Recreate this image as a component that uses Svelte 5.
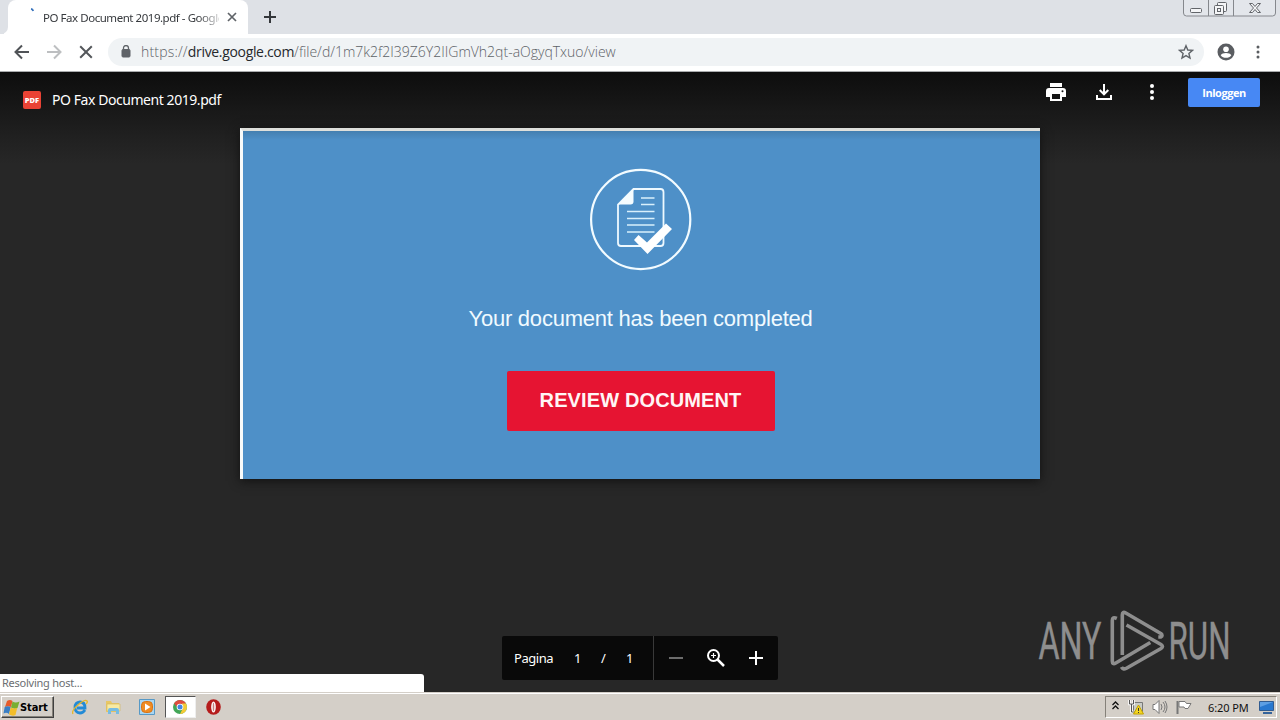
<script lang="ts">
	const fileName = 'PO Fax Document 2019.pdf';
	const path = '/file/d/1m7k2f2I39Z6Y2IIGmVh2qt-aOgyqTxuo/view';
	const lines = [217.5, 224.5, 231, 238];
</script>

<div class="screen">
	<header class="tab-strip">
		<div class="previous-tab"></div>
		<div class="tab">
			<svg class="spinner" width="16" height="16" viewBox="0 0 16 16">
				<path d="M7 2.800Q8.700 3 9.200 5" fill="none" stroke="#3974bd" stroke-width="1.800" />
			</svg>
			<span class="tab-title">{fileName} - Google</span>
			<svg width="10" height="10" viewBox="0 0 10 10">
				<path d="M1 1l8 8M9 1L1 9" stroke="#5f6368" stroke-width="1.700" />
			</svg>
		</div>
		<div class="new-tab">
			<svg width="12" height="12" viewBox="0 0 12 12">
				<path d="M6 0v12M0 6h12" stroke="#34373b" stroke-width="2" />
			</svg>
		</div>
		<svg class="window-controls" width="94" height="17" viewBox="0 0 94 17">
			<path d="M.5 0v13q0 3 3 3h86q3 0 3-3V0M25.500 0v16M50.500 0v16" fill="#e3e6eb" stroke="#85888d" />
			<g fill="#f4f5f7" stroke="#62656a">
				<rect x="7.500" y="8.500" width="11" height="4" rx="1" />
				<rect x="34.500" y="2.500" width="9" height="9" rx="1" />
				<rect x="31.500" y="5.500" width="9" height="9" rx="1" />
				<rect x="34.500" y="8.500" width="3" height="3" />
				<path d="M66.500 3.500h3l2.500 3 2.500-3h3l-4 4.500 4 4.500h-3l-2.500-3-2.500 3h-3l4-4.500z" />
			</g>
		</svg>
	</header>

	<nav class="toolbar">
		<svg class="nav-icon" viewBox="0 0 16 16">
			<path d="M15 8H2M8 1.500L1.500 8 8 14.500" fill="none" stroke="#505357" stroke-width="2" />
		</svg>
		<svg class="nav-icon" viewBox="0 0 16 16">
			<path d="M1 8h13M8 1.500L14.500 8 8 14.500" fill="none" stroke="#bdbfc1" stroke-width="2" />
		</svg>
		<svg class="nav-icon" viewBox="0 0 16 16">
			<path d="M2.200 2.200l11.600 11.600M13.800 2.200L2.200 13.800" stroke="#54575b" stroke-width="2" />
		</svg>
		<div class="address">
			<svg width="10" height="13" viewBox="0 0 10 13">
				<rect x="1" y="4.500" width="8" height="7.500" rx="1" fill="#5f6368" stroke="#5f6368" />
				<path d="M2.500 5V3a2.500 2.500 0 015 0v2" fill="none" stroke="#5f6368" stroke-width="1.300" />
			</svg>
			<span class="url"><span class="scheme">https://</span><b>drive.google.com</b>{path}</span>
			<svg class="star" width="16" height="16" viewBox="0 0 16 16">
				<path d="M8 1.700l1.800 4.300 4.700.4-3.600 3.100 1.100 4.600L8 11.600l-4 2.500 1.100-4.600L1.500 6.400l4.700-.4z" fill="none" stroke="#5f6368" stroke-width="1.400" />
			</svg>
		</div>
		<svg class="profile" width="18" height="18" viewBox="0 0 18 18">
			<circle cx="9" cy="9" r="8.500" fill="#5a5d61" />
			<circle cx="9" cy="6.200" r="2.800" fill="#fff" />
			<path d="M3.700 12.200C5 9.400 13 9.400 14.300 12.200 12 15.700 6 15.700 3.700 12.200z" fill="#fff" />
		</svg>
		<svg class="browser-menu" width="4" height="14" viewBox="0 0 4 14" fill="#5a5d61">
			<circle cx="2" cy="2" r="1.500" /><circle cx="2" cy="7" r="1.500" /><circle cx="2" cy="12" r="1.500" />
		</svg>
	</nav>

	<main class="viewer">
		<div class="viewer-bar">
			<div class="pdf-badge">PDF</div>
			<h1>{fileName}</h1>
			<div class="viewer-actions">
				<svg width="20" height="18" viewBox="0 0 20 18">
					<path d="M4 0h12v4H4zM3 5h14q3 0 3 3v6h-4v4H4v-4H0V8q0-3 3-3z" fill="#fff" />
					<path d="M6 11h8v5H6z" fill="#151515" />
					<circle cx="16.500" cy="8.300" r="1" fill="#151515" />
				</svg>
				<svg width="16" height="16" viewBox="0 0 16 16">
					<path d="M8 0v10M3.700 6L8 10.300 12.300 6M1 11v4h14v-4" fill="none" stroke="#fff" stroke-width="2" />
				</svg>
				<svg width="4" height="16" viewBox="0 0 4 16" fill="#fff">
					<circle cx="2" cy="2" r="2" /><circle cx="2" cy="8" r="2" /><circle cx="2" cy="14" r="2" />
				</svg>
			</div>
			<button class="login">Inloggen</button>
		</div>

		<section class="page">
			<svg class="document-icon" width="102" height="104" viewBox="590 168 102 104">
				<circle cx="640.700" cy="219.500" r="49.600" fill="none" stroke="#f2fbff" stroke-width="2.200" />
				<path d="M633.500 189h27q3 0 3 3v51q0 3-3 3h-39.500q-3 0-3-3v-38.500z" fill="none" stroke="#eef9ff" stroke-width="1.800" />
				<path d="M618 204.500L633.500 189v12.500q0 3-3 3z" fill="#f5fcff" />
				<path d="M641 198h13.500M641 204.500h13.500" stroke="#d9f0fc" stroke-width="1.500" />
				{#each lines as y}
					<path d="M627 {y - 6}h27.500" stroke="#d9f0fc" stroke-width="1.500" />
				{/each}
				<path d="M634 240l4.500-5 8.500 7.500 19-19 6 5.500-24.500 25z" fill="#fff" />
			</svg>
			<p>Your document has been completed</p>
			<button class="review">REVIEW DOCUMENT</button>
		</section>

		<svg class="watermark" width="198" height="64" viewBox="1036 608 198 64">
			<g fill="#8e8e8e" stroke="#8e8e8e" stroke-width=".4" font-family="Roboto, sans-serif" font-size="51">
				<text x="1038.500" y="659" textLength="63" lengthAdjust="spacingAndGlyphs">ANY</text>
				<text x="1168.500" y="659" textLength="62" lengthAdjust="spacingAndGlyphs">RUN</text>
			</g>
			<g fill="none" stroke="#8e8e8e" stroke-width="3.600" stroke-linejoin="round">
				<path d="M1116.800 618.500q-4.500-2-4.500 2V661q0 4 3.500 2l34.500-20.500" />
				<path d="M1122.300 655v-40q0-4 3.500-2l35 20.500q2.500 2 0 3.500h-2.500" />
				<path d="M1126.500 625l34.500 19.500q3 2 0 4L1126 668.500q-3 1.500-4.500-1.500" />
			</g>
		</svg>

		<div class="page-controls">
			<div class="page-count">
				<span class="label">Pagina</span><span class="current">1</span><span class="slash">/</span><span>1</span>
			</div>
			<div class="zoom-controls">
				<svg width="14" height="14" viewBox="0 0 14 14"><path d="M0 7h14" stroke="#6c6c6c" stroke-width="2" /></svg>
				<svg width="18" height="18" viewBox="0 0 18 18">
					<circle cx="6.500" cy="6.500" r="5.500" fill="none" stroke="#fff" stroke-width="2" />
					<path d="M10.500 10.500l6.500 6.500" stroke="#fff" stroke-width="2.500" />
					<path d="M6.500 4v5M4 6.500h5" stroke="#fff" stroke-width="1.200" />
				</svg>
				<svg width="14" height="14" viewBox="0 0 14 14"><path d="M0 7h14M7 0v14" stroke="#fff" stroke-width="2" /></svg>
			</div>
		</div>
		<div class="status">Resolving host...</div>
	</main>

	<footer class="taskbar">
		<button class="start">
			<svg width="17" height="17" viewBox="0 0 17 17">
				<path d="M4 2q3-2 5.500 0L8 8Q5 6.500 2 8z" fill="#e65b2b" />
				<path d="M9.500 2.500q3 2 7 0L14.500 9q-3 1.500-6.500-.5z" fill="#79ae31" />
				<path d="M1.700 8q3-1.500 6 0L6 15q-2.500-2-5.500-.5z" fill="#397ec4" />
				<path d="M7.700 8.500q3 1.700 6.500.5l-1.700 7q-3 1.500-6.500-.5z" fill="#f3bd29" />
			</svg>
			<span>Start</span>
		</button>
		<div class="quick-launch">
			<div class="launcher">
				<svg width="16" height="16" viewBox="0 0 16 16">
					<path d="M13 11q-2 3-5 3-5-.5-5-5.500T8 3q5 0 5 6H5" fill="none" stroke="#238bd6" stroke-width="2.800" />
					<path d="M1 15Q-1 12 6 6t9-4q1 1-1 3" fill="none" stroke="#e6b72b" stroke-width="1.300" />
				</svg>
			</div>
			<div class="launcher">
				<svg width="16" height="16" viewBox="0 0 16 16">
					<path d="M1 2h5l1 2h7v9H1z" fill="#e8c765" />
					<path d="M2 5h13v7H2z" fill="#f8eaa2" stroke="#d2b55b" stroke-width=".6" />
					<path d="M3 15v-4q0-2 2-2h7q2 0 2 2v4h-3v-3H6v3z" fill="#77bce2" />
				</svg>
			</div>
			<div class="launcher">
				<svg width="16" height="16" viewBox="0 0 16 16">
					<path d="M.5.5h15v15H.5z" fill="#a9d6f2" stroke="#5799c6" />
					<rect x="2.500" y="2.500" width="11" height="11" rx="4" fill="#ef8b22" stroke="#d77316" />
					<path d="M6 4.500l5.500 3.500L6 11.500z" fill="#fff" />
				</svg>
			</div>
			<div class="launcher active">
				<svg width="14" height="14" viewBox="0 0 14 14">
					<circle cx="7" cy="7" r="7" fill="#42a657" />
					<path d="M1 3.500A7 7 0 0113 3.500L7 5z" fill="#e04c3f" />
					<path d="M13 3.500A7 7 0 017 14l3-6-1-4.500z" fill="#f5ca35" />
					<path d="M1 3.500L5 8l2-4.500z" fill="#e04c3f" />
					<circle cx="7" cy="7" r="3.300" fill="#fff" /><circle cx="7" cy="7" r="2.500" fill="#4286e2" />
				</svg>
			</div>
			<div class="launcher">
				<svg width="15" height="16" viewBox="0 0 15 16">
					<ellipse cx="7.500" cy="8" rx="7.300" ry="7.800" fill="#b51c1c" />
					<ellipse cx="7.500" cy="8" rx="2.300" ry="5.500" fill="#fff" />
					<ellipse cx="7.500" cy="8" rx=".8" ry="4.300" fill="#c98080" />
				</svg>
			</div>
		</div>
		<div class="tray">
			<svg class="chevrons" width="7" height="9" viewBox="0 0 7 9">
				<path d="M.5 4l3-3 3 3M.5 8l3-3 3 3" fill="none" stroke="#111" stroke-width="1.300" />
			</svg>
			<svg class="network" width="16" height="16" viewBox="0 0 16 16">
				<path d="M5.500 3.500h9v9h-9z" fill="#c9ccc6" stroke="#777" />
				<path d="M1.500 1v4h4V1M3.500 5v8h4" fill="none" stroke="#fff" stroke-width="2.500" />
				<path d="M1.500 1v4h4V1M3.500 5v8h4" fill="none" stroke="#555" stroke-width="1" />
				<path d="M10.500 6l5 9h-10z" fill="#f4d622" stroke="#c3a200" /><path d="M10.500 9v3M10.500 13v1" stroke="#333" />
			</svg>
			<svg class="speaker" width="16" height="14" viewBox="0 0 16 14">
				<path d="M1 4.500h2l4-4v13l-4-4H1z" fill="#fff" stroke="#777" />
				<path d="M9 4q2 3 0 6M11 2q4 5 0 10M13 1q4 6 0 12" fill="none" stroke="#777" />
			</svg>
			<svg class="flag" width="17" height="15" viewBox="0 0 17 15">
				<path d="M1.500 1v13" stroke="#777" stroke-width="2" />
				<path d="M3 1.500h6l1.500 2H15l-3 5H9l-1-1.500H3z" fill="#fff" stroke="#777" />
			</svg>
			<time>6:20 PM</time>
			<svg class="desktop" width="16" height="13" viewBox="0 0 16 13">
				<path d="M.5.500h14v9H.5z" fill="#2878cf" stroke="#315c91" />
				<path d="M1 1h13L1 6z" fill="#5d9fe3" /><path d="M4 12h9" stroke="#36649b" stroke-width="2" />
			</svg>
		</div>
	</footer>
</div>

<style>
	:global(body) {
		margin: 0;
		overflow: hidden;
	}

	* {
		box-sizing: border-box;
	}

	.screen {
		width: 1280px;
		height: 720px;
		display: flex;
		flex-direction: column;
		font-family: 'Noto Sans', sans-serif;
	}

	svg {
		display: block;
		flex: none;
	}

	button {
		border: 0;
		padding: 0;
	}

	.tab-strip {
		height: 34px;
		display: flex;
		background: #dee1e6;
	}

	.previous-tab {
		width: 8px;
		background: #dee1e6;
		border-radius: 0 0 7px 0;
		box-shadow: 4px 4px 0 #fff;
		clip-path: inset(0);
	}

	.tab {
		width: 240px;
		padding: 0 11px 0 16px;
		display: flex;
		align-items: center;
		background: #fff;
		border-radius: 8px 8px 0 0;
	}

	.spinner {
		margin-top: -6px;
	}

	.tab-title {
		width: 176px;
		margin: 0 8px 0 3px;
		font-size: 11.5px;
		letter-spacing: -0.46px;
		white-space: nowrap;
		color: #36393d;
		mask-image: linear-gradient(90deg, #000 155px, transparent 182px);
	}

	.new-tab {
		display: flex;
		align-items: center;
		padding-left: 16px;
	}

	.window-controls {
		margin: 0 3px 0 auto;
	}

	.toolbar {
		height: 38px;
		display: flex;
		align-items: center;
		padding: 0 20px 2px 14px;
		background: #fff;
		border-bottom: 1px solid #a9abad;
	}

	.nav-icon {
		width: 16px;
		height: 16px;
		margin-right: 16px;
	}

	.address {
		width: 1096px;
		height: 28px;
		margin-left: -2px;
		padding: 0 10px 0 13px;
		display: flex;
		align-items: center;
		background: #f0f3f5;
		border-radius: 14px;
	}

	.url {
		margin-left: 10px;
		font-family: 'Open Sans', sans-serif;
		font-size: 14px;
		font-weight: 300;
		color: #5d6267;
		white-space: nowrap;
	}

	.scheme {
		letter-spacing: 0.18px;
	}

	.url b {
		font-weight: 400;
		letter-spacing: -0.33px;
		color: #25282c;
	}

	.star {
		margin-left: auto;
	}

	.profile {
		margin-left: 13px;
	}

	.browser-menu {
		margin-left: 21px;
	}

	.viewer {
		position: relative;
		height: 620px;
		background: linear-gradient(#0d0d0d, #202020 64px, #272727 92px);
	}

	.viewer-bar {
		height: 56px;
		display: flex;
		align-items: center;
		padding: 0 20px 0 23px;
		color: #fff;
	}

	.pdf-badge {
		width: 18px;
		height: 18px;
		border-radius: 2px;
		background: #e94335;
		font: 800 7.5px/18px 'Open Sans', sans-serif;
		text-align: center;
	}

	h1 {
		margin: -2px 0 0 11px;
		font-family: 'Noto Sans', sans-serif;
		font-size: 14px;
		font-weight: 400;
		letter-spacing: -0.44px;
		white-space: nowrap;
	}

	.viewer-actions {
		display: flex;
		align-items: center;
		gap: 30px;
		margin: -17px 34px 0 auto;
	}

	.viewer-actions svg:last-child {
		margin-left: 8px;
	}

	.login {
		width: 72px;
		height: 29px;
		margin-top: -15px;
		padding-bottom: 1px;
		border-radius: 2px;
		background: #4788f4;
		color: #fff;
		font: 700 11px 'Open Sans', sans-serif;
		letter-spacing: -0.45px;
	}

	.page {
		width: 800px;
		height: 351px;
		margin: 0 auto;
		padding: 37px 2px 0 0;
		display: flex;
		flex-direction: column;
		align-items: center;
		border-top: 3px solid #dedfdb;
		border-left: 3px solid #f8fafa;
		background: linear-gradient(#447fb0, #4e90c8 9px);
		box-shadow: 0 2px 10px #111;
	}

	.page p {
		margin: 33px 0 0;
		font: 22px/28px 'Liberation Sans', sans-serif;
		letter-spacing: -0.23px;
		color: #f0faff;
	}

	.review {
		width: 268px;
		height: 60px;
		margin-top: 38px;
		padding-bottom: 2px;
		border-radius: 2px;
		background: #e61432;
		color: #fff5f5;
		font: bold 20px 'Liberation Sans', sans-serif;
		letter-spacing: 0.12px;
	}

	.watermark {
		position: absolute;
		right: 46px;
		bottom: 20px;
	}

	.page-controls {
		position: absolute;
		left: 502px;
		bottom: 12px;
		width: 276px;
		height: 44px;
		display: flex;
		border-radius: 2px;
		background: #090909;
		color: #fff;
		font: 13px 'Noto Sans', sans-serif;
	}

	.page-count {
		width: 152px;
		padding-left: 12px;
		display: flex;
		align-items: center;
		border-right: 1px solid #393939;
	}

	.label {
		width: 60px;
		letter-spacing: -0.45px;
	}

	.current {
		width: 27px;
	}

	.slash {
		width: 25px;
	}

	.zoom-controls {
		flex: 1;
		display: flex;
		align-items: center;
		justify-content: space-between;
		padding: 0 15px;
	}

	.status {
		position: absolute;
		left: 0;
		bottom: 0;
		width: 424px;
		height: 18px;
		padding-left: 2px;
		border-radius: 0 3px 0 0;
		background: #fff;
		color: #6b6e71;
		font-size: 11px;
		letter-spacing: -0.24px;
		line-height: 18px;
	}

	.taskbar {
		height: 28px;
		display: flex;
		align-items: center;
		padding: 1px 3px 0 1px;
		background: #d4cfc8;
		border-top: 1px solid #d4cfc8;
		box-shadow: inset 0 1px #fff;
	}

	.start {
		width: 53px;
		height: 22px;
		display: flex;
		align-items: center;
		padding-left: 1px;
		background: #d4cfc8;
		border: 1px solid;
		border-color: #fff #404040 #404040 #fff;
		box-shadow: inset -1px -1px #858179;
		color: #000;
		font: bold 11px 'DejaVu Sans Condensed', 'DejaVu Sans', sans-serif;
		letter-spacing: -0.1px;
	}

	.quick-launch {
		display: flex;
		align-items: center;
		margin-left: 10px;
		gap: 2px;
	}

	.launcher {
		width: 31.500px;
		height: 22px;
		display: flex;
		align-items: center;
		justify-content: center;
	}

	.launcher.active {
		background: #fff;
		border: 1px solid;
		border-color: #555 #eee #eee #555;
	}

	.tray {
		width: 172px;
		height: 22px;
		margin-left: auto;
		padding-left: 6px;
		display: flex;
		align-items: center;
		border: 1px solid;
		border-color: #858179 #fff #fff #858179;
	}

	.chevrons {
		margin-top: -3px;
	}

	.network {
		margin-left: 9px;
	}

	.speaker {
		margin-left: 8px;
	}

	.flag {
		margin-left: 8px;
	}

	time {
		margin-left: 15px;
		width: 51px;
		font-size: 11px;
		letter-spacing: -0.1px;
		white-space: nowrap;
		color: #111;
	}
</style>
